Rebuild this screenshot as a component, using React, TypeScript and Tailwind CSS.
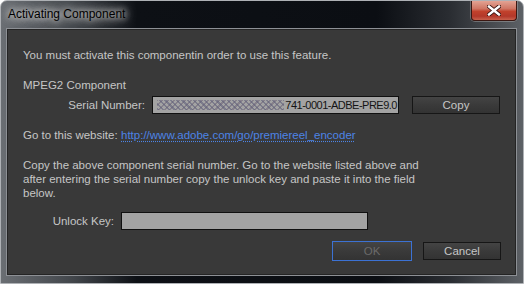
import React from 'react';

const body = "font-['Liberation_Sans',Arial,sans-serif] text-[11.5px] leading-[14px] text-[#c6c6c6]";

const CloseGlyph = () => (
  <svg width="14" height="11" viewBox="0 0 14 11">
    <path d="M2 1.5 L12 9.5 M12 1.5 L2 9.5" stroke="#3a1410" strokeWidth="4.2" strokeLinecap="square" />
    <path d="M2 1.5 L12 9.5 M12 1.5 L2 9.5" stroke="#ffffff" strokeWidth="2.4" strokeLinecap="square" />
  </svg>
);

const Button = ({ label, className }: { label: string; className?: string }) => (
  <div
    className={`flex items-center justify-center border bg-[linear-gradient(180deg,#444444_0%,#3a3a3a_50%,#333333_100%)] ${className ?? ''}`}
  >
    {label}
  </div>
);

export default function App() {
  return (
    <div className="flex h-[284px] w-[524px] flex-col overflow-hidden rounded-t-[7px] border border-[#aeb1b5] bg-[linear-gradient(90deg,#6a6e73_0%,#41454a_14%,#0d1015_26%,#0b0e13_72%,#2a2d32_86%,#5d6166_100%)]">
      {/* title bar */}
      <div className="flex h-[27px] shrink-0 items-start justify-between">
        <span className="ml-[7px] mt-[6px] font-['Liberation_Sans',Arial,sans-serif] text-[12px] leading-[15px] text-black [text-shadow:0_0_6px_#e8e8e8,0_0_10px_#d0d0d0,0_0_14px_#b8b8b8]">
          Activating Component
        </span>
        <div className="mr-[6px] flex h-[20px] w-[46px] items-center justify-center rounded-b-[4px] border border-t-0 border-[#3b1712] bg-[linear-gradient(180deg,#e3a393_0%,#cf7664_40%,#c1412c_55%,#b3382a_80%,#c8604c_100%)] shadow-[0_0_0_1px_rgba(200,200,200,0.35)]">
          <CloseGlyph />
        </div>
      </div>

      {/* client frame */}
      <div className="mb-[7px] ml-[5px] mr-[6px] flex flex-1 flex-col border border-[#8d9095] bg-[#393939]">
        <div className={`flex flex-1 flex-col border border-[#242424] pl-[15px] pr-[14px] ${body}`}>
          <div className="mt-[18px]">You must activate this componentin order to use this feature.</div>

          <div className="mt-[16px]">MPEG2 Component</div>

          <div className="mt-[4px] flex h-[18px] items-center">
            <span className="w-[122px] text-right">Serial Number:</span>
            <div className="ml-[7px] flex h-[18px] w-[247px] items-center justify-end overflow-hidden border border-[#101010] bg-[#a3a3a3] pr-[1px] text-[#141414]">
              <div className="ml-[4px] mr-[1px] h-[10px] flex-1 bg-[repeating-linear-gradient(45deg,rgba(92,92,120,0.55)_0_1.5px,transparent_1.5px_4px),repeating-linear-gradient(-45deg,rgba(110,100,120,0.55)_0_1.5px,transparent_1.5px_4px)]" />
              <span className="whitespace-nowrap text-[11px] tracking-[-0.5px]">741-0001-ADBE-PRE9.0</span>
            </div>
            <Button label="Copy" className="ml-[13px] h-[18px] w-[88px] border-[#161616]" />
          </div>

          <div className="mt-[14px] flex">
            <span className="w-[98px]">Go to this website:</span>
            <span className="text-[#4d84e6] underline decoration-dotted underline-offset-2">
              http://www.adobe.com/go/premiereel_encoder
            </span>
          </div>

          <div className="mt-[16px] whitespace-nowrap">
            Copy the above component serial number. Go to the website listed above and
            <br />
            after entering the serial number copy the unlock key and paste it into the field
            <br />
            below.
          </div>

          <div className="mt-[12px] flex h-[18px] items-center">
            <span className="w-[91px] text-right">Unlock Key:</span>
            <div className="ml-[7px] h-[18px] w-[247px] border border-[#101010] bg-[#a3a3a3]" />
          </div>

          <div className="mt-[11px] flex items-center justify-end">
            <Button label="OK" className="h-[20px] w-[80px] border-[#3c72d4] text-[#6a6a6a]" />
            <Button label="Cancel" className="ml-[11px] h-[18px] w-[78px] border-[#161616]" />
          </div>
        </div>
      </div>
    </div>
  );
}
